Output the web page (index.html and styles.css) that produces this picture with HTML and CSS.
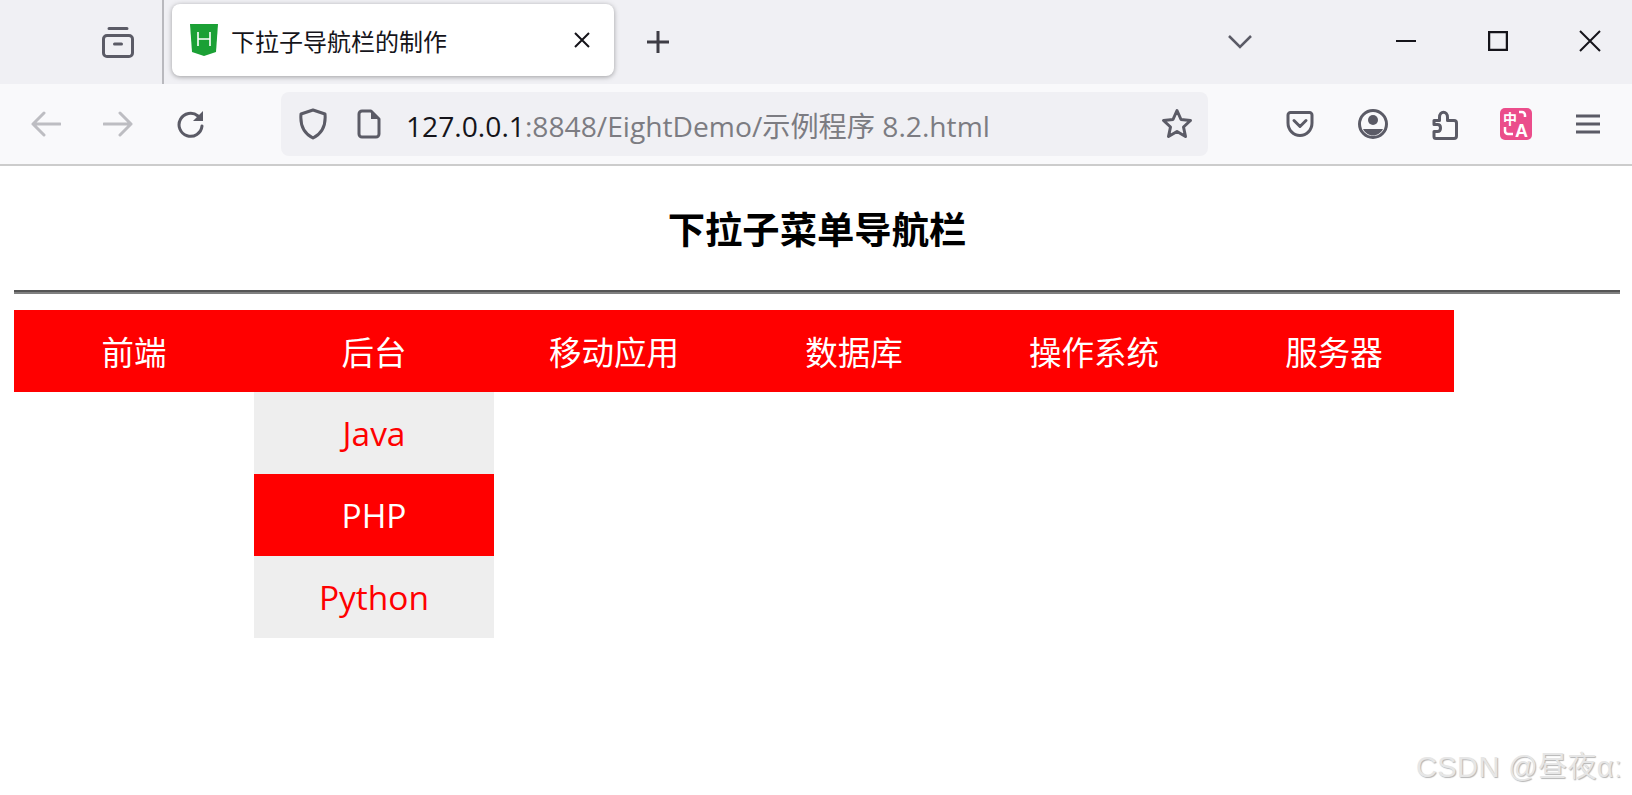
FILE: index.html
```html
<!DOCTYPE html>
<html lang="zh">
<head>
  <meta charset="UTF-8">
  <title>下拉子导航栏的制作</title>
  <link rel="stylesheet" href="styles.css">
</head>
<body>

<!-- tab strip -->
<div class="tabbar">
  <div class="tabbar-left">
    <svg class="icon" width="36" height="36" viewBox="0 0 36 36"><path d="M9 4.500h18M3.500 15v14a3.500 3.500 0 0 0 3.500 3.500h22a3.500 3.500 0 0 0 3.500-3.500v-14a3.500 3.500 0 0 0-3.500-3.500h-22a3.500 3.500 0 0 0-3.500 3.500zM14.500 20h7"/></svg>
  </div>
  <div class="tab">
    <svg class="favicon" width="28" height="32" viewBox="0 0 28 32"><path class="fav-shield" d="M0 0h28l-2 28-12 4-12-4z"/><path class="fav-h" d="M8 8v14M20 8v14M8 15h12"/></svg>
    <span class="tab-title">下拉子导航栏的制作</span>
    <svg class="tab-close" width="18" height="18" viewBox="0 0 18 18"><path d="M2 2l14 14M16 2L2 16"/></svg>
  </div>
  <svg class="newtab" width="24" height="24" viewBox="0 0 24 24"><path d="M12 1v22M1 12h22"/></svg>
  <svg class="tablist" width="24" height="14" viewBox="0 0 24 14"><path d="M1 1l11 11L23 1"/></svg>
  <svg class="win win-min" width="20" height="20" viewBox="0 0 20 20"><path d="M0 10h20"/></svg>
  <svg class="win win-max" width="20" height="20" viewBox="0 0 20 20"><path d="M1 1h18v18H1z"/></svg>
  <svg class="win win-close" width="22" height="22" viewBox="0 0 22 22"><path d="M1 1l20 20M21 1L1 21"/></svg>
</div>

<!-- toolbar -->
<div class="toolbar">
  <svg class="icon nav-btn off" width="30" height="26" viewBox="0 0 30 26"><path d="M29 13H2M13 2L2 13l11 11"/></svg>
  <svg class="icon nav-btn off" width="30" height="26" viewBox="0 0 30 26"><path d="M1 13h27M17 2l11 11-11 11"/></svg>
  <svg class="icon nav-btn reload" width="30" height="30" viewBox="0 0 30 30"><path d="M25 17a11.500 11.500 0 1 1-4-10"/><path class="solid" d="M26 2v10H16z"/></svg>
  <div class="urlbar">
    <svg class="icon shield" width="30" height="32" viewBox="0 0 30 32"><path d="M15 2l12 4c1 11-2 19-12 24C5 25 2 17 3 6z"/></svg>
    <svg class="icon page-icon" width="24" height="30" viewBox="0 0 24 30"><path d="M5 2h9l8 8v15a3 3 0 0 1-3 3H5a3 3 0 0 1-3-3V5a3 3 0 0 1 3-3z"/><path class="solid" d="M14 2l8 8h-8z"/></svg>
    <div class="url"><span class="host">127.0.0.1</span>:8848/EightDemo/示例程序 8.2.html</div>
    <svg class="icon star" width="32" height="32" viewBox="0 0 32 32"><path d="M16 2.500l4 9 9.500 1-7 6.500 2 9.500-8.500-5-8.500 5 2-9.500-7-6.500 9.500-1z"/></svg>
  </div>
  <div class="toolbar-right">
    <svg class="icon" width="28" height="26" viewBox="0 0 28 26"><path d="M2 4a2.500 2.500 0 0 1 2.500-2.500h19A2.500 2.500 0 0 1 26 4v8c0 7-5.500 12.500-12 12.500S2 19 2 12zM8 9.500l6 6 6-6"/></svg>
    <svg class="icon" width="30" height="30" viewBox="0 0 30 30"><circle cx="15" cy="15" r="13.500"/><circle class="solid" cx="15" cy="11" r="5"/><path class="solid" d="M5 20h20c-2 4-6 6.500-10 6.500S7 24 5 20z"/></svg>
    <svg class="icon" width="26" height="32" viewBox="0 0 26 32"><path d="M2 12.500h5.500V9.500c0-7 8-7 8 0v3H22a2.500 2.500 0 0 1 2.500 2.500v13a2.500 2.500 0 0 1-2.500 2.500H4a2 2 0 0 1-2-2v-5h3.500c4 0 4-7 0-7H2z"/></svg>
    <svg class="translate" width="32" height="32" viewBox="0 0 32 32">
      <rect class="tr-bg" width="32" height="32" rx="5"/>
      <text class="tr-text" x="3" y="16" font-size="14">中</text>
      <text class="tr-text" x="15" y="29" font-size="18">A</text>
      <path class="tr-mark" d="M19 4h3a3 3 0 0 1 3 3v2M5 19v4a3 3 0 0 0 3 3h5"/>
    </svg>
    <svg class="icon" width="24" height="20" viewBox="0 0 24 20"><path d="M0 2h24M0 10h24M0 18h24"/></svg>
  </div>
</div>

<!-- page -->
<div class="page">
  <h2 class="heading">下拉子菜单导航栏</h2>
  <hr class="rule">
  <ul class="menu">
    <li class="menu-item">前端</li>
    <li class="menu-item">后台
      <ul class="submenu">
        <li class="sub-item">Java</li>
        <li class="sub-item active">PHP</li>
        <li class="sub-item">Python</li>
      </ul>
    </li>
    <li class="menu-item">移动应用</li>
    <li class="menu-item">数据库</li>
    <li class="menu-item">操作系统</li>
    <li class="menu-item">服务器</li>
  </ul>
</div>

<div class="watermark">CSDN @昼夜αː</div>

</body>
</html>
```

FILE: styles.css
```css
html, body {
  margin: 0;
  padding: 0;
  height: 795px;
  overflow: hidden;
  background-color: #ffffff;
  font-family: "Open Sans", "Noto Sans CJK SC", sans-serif;
}

svg path, svg circle {
  fill: none;
}

.icon {
  flex: none;
  stroke: #5b5b66;
  stroke-width: 3;
  stroke-linejoin: round;
  stroke-linecap: round;
}

.icon .solid {
  fill: #5b5b66;
  stroke: none;
}

/* tab strip */
.tabbar {
  height: 84px;
  background-color: #f0f0f4;
  display: flex;
  align-items: center;
}

.tabbar-left {
  width: 164px;
  height: 84px;
  border-right: 2px solid #b9b9be;
  display: flex;
  align-items: center;
  padding-left: 100px;
  box-sizing: border-box;
  flex: none;
}

.tab {
  width: 442px;
  height: 72px;
  margin-left: 8px;
  margin-top: -4px;
  background-color: #ffffff;
  border-radius: 8px;
  box-shadow: 0 1px 5px rgba(0,0,0,0.35);
  display: flex;
  align-items: center;
  padding-left: 18px;
  box-sizing: border-box;
  flex: none;
}

.favicon {
  flex: none;
}

svg .fav-shield {
  fill: #1ba035;
}

svg .fav-h {
  stroke: #ffffff;
  stroke-width: 1.6;
}

.tab-title {
  margin-left: 13px;
  font-size: 24px;
  color: #15141a;
  width: 342px;
}

.tab-close, .win, .newtab, .tablist {
  flex: none;
}

.tab-close path, .win path {
  stroke: #15141a;
  stroke-width: 2;
}

.newtab {
  margin-left: 32px;
}

.newtab path {
  stroke: #3e3d45;
  stroke-width: 3;
}

.tablist {
  margin-left: 558px;
}

.tablist path {
  stroke: #5b5b66;
  stroke-width: 2.5;
}

.win { margin-top: -3px; }
.win-min { margin-left: 144px; }
.win-max { margin-left: 72px; }
.win-close { margin-left: 71px; }
.win-max path { stroke-width: 2.5; }

/* toolbar */
.toolbar {
  height: 80px;
  background-color: #f9f9fb;
  border-bottom: 2px solid #cccccc;
  display: flex;
  align-items: center;
  padding-left: 31px;
}

.nav-btn {
  margin-right: 42px;
}

.nav-btn.off {
  stroke: #bdbdc2;
}

.reload {
  margin-left: 2px;
}

.urlbar {
  width: 927px;
  height: 64px;
  margin-left: 32px;
  background-color: #f0f0f4;
  border-radius: 8px;
  display: flex;
  align-items: center;
  padding-left: 17px;
  box-sizing: border-box;
  flex: none;
}

.page-icon {
  margin-left: 29px;
}

.url {
  margin-left: 25px;
  width: 613px;
  font-size: 28.2px;
  color: #7c7c82;
  white-space: nowrap;
}

.host {
  color: #15141a;
}

.star {
  margin-left: 142px;
}

.toolbar-right {
  display: flex;
  align-items: center;
  gap: 44px;
  margin-left: 78px;
}

.translate {
  flex: none;
  margin-left: -2px;
}

.tr-bg {
  fill: #eb4d8b;
}

.tr-text {
  fill: #ffffff;
  font-weight: bold;
  font-family: "Liberation Sans", "Noto Sans CJK SC", sans-serif;
}

svg .tr-mark {
  stroke: #ffffff;
  stroke-width: 2.5;
}

/* page */
.page {
  padding: 0 12px 0 14px;
}

.heading {
  margin: 0;
  padding-top: 38px;
  height: 86px;
  font-size: 37.33px;
  line-height: 52px;
  font-weight: bold;
  text-align: center;
  color: #000000;
}

.rule {
  margin: 0 0 16px 0;
  height: 4px;
  border: none;
  box-sizing: border-box;
  border-top: 2px solid #555555;
  border-bottom: 2px solid #808080;
}

.menu {
  list-style: none;
  margin: 0;
  padding: 0;
  display: flex;
  width: 1440px;
  background-color: #ff0000;
}

.menu-item {
  position: relative;
  width: 240px;
  height: 82px;
  box-sizing: border-box;
  padding-top: 4px;
  line-height: 78px;
  text-align: center;
  font-size: 32.5px;
  color: #ffffff;
}

.submenu {
  list-style: none;
  margin: 0;
  padding: 0;
  position: absolute;
  left: 0;
  top: 82px;
  width: 240px;
}

.sub-item {
  height: 82px;
  box-sizing: border-box;
  padding-top: 2px;
  line-height: 78px;
  font-size: 33.5px;
  background-color: #eeeeee;
  color: #ff0000;
}

.sub-item.active {
  background-color: #ff0000;
  color: #ffffff;
}

.watermark {
  position: absolute;
  left: 1416px;
  top: 746px;
  white-space: nowrap;
  font-family: "Liberation Sans", "Noto Sans CJK SC", sans-serif;
  font-size: 29px;
  letter-spacing: 0.4px;
  line-height: 42px;
  color: #e6e6e6;
  text-shadow: 1px 1px 1px #b5b5b5;
}
```
